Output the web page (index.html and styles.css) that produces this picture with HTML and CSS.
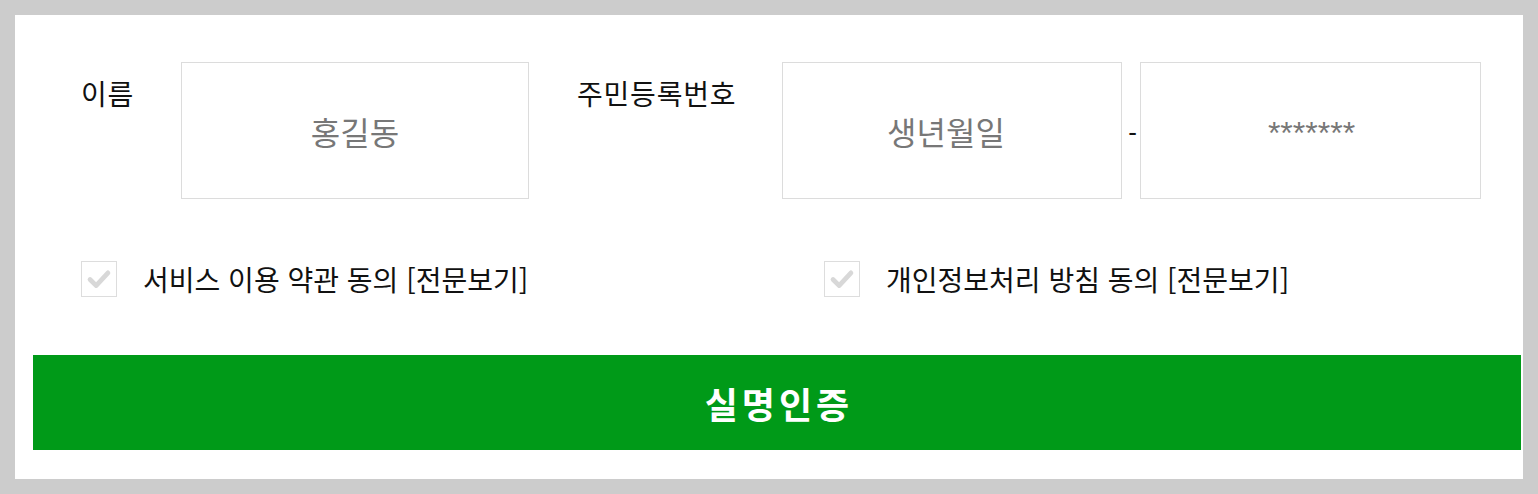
FILE: index.html
```html
<!DOCTYPE html>
<html lang="ko">
<head>
<meta charset="utf-8">
<title>실명인증</title>
<link rel="stylesheet" href="styles.css">
</head>
<body>
<div class="panel">
  <div class="fields">
    <div class="label label-name">이름</div>
    <div class="input input-name">홍길동</div>
    <div class="label label-rrn">주민등록번호</div>
    <div class="input input-birth">생년월일</div>
    <div class="dash">-</div>
    <div class="input input-back"><span class="stars">*******</span></div>
  </div>
  <div class="agrees">
    <label class="agree agree-first">
      <span class="check"><svg viewBox="0 0 36 36" width="34" height="34"><path d="M8.5 18.5 L15 25 L27.5 11.5" fill="none" stroke="#d8d8d8" stroke-width="5" stroke-linecap="round" stroke-linejoin="round"/></svg></span>
      <span class="agree-text">서비스 이용 약관 동의 [전문보기]</span>
    </label>
    <label class="agree">
      <span class="check"><svg viewBox="0 0 36 36" width="34" height="34"><path d="M8.5 18.5 L15 25 L27.5 11.5" fill="none" stroke="#d8d8d8" stroke-width="5" stroke-linecap="round" stroke-linejoin="round"/></svg></span>
      <span class="agree-text">개인정보처리 방침 동의 [전문보기]</span>
    </label>
  </div>
  <button class="submit" type="button">실명인증</button>
</div>
</body>
</html>
```

FILE: styles.css
```css
html, body {
  margin: 0;
  padding: 0;
}
body {
  background: #cccccc;
  padding: 15px;
  font-family: "Noto Sans CJK KR", "Noto Sans", sans-serif;
  color: #111;
}
.panel {
  background: #ffffff;
  width: 1508px;
  height: 464px;
  box-sizing: border-box;
  padding: 47px 2px 0 18px;
}
.fields {
  display: flex;
  align-items: flex-start;
  padding-left: 48px;
}
.label {
  font-size: 28px;
  line-height: 30px;
  padding-top: 16px;
  letter-spacing: 0.8px;
  color: #111;
  white-space: nowrap;
}
.label-name {
  width: 100px;
}
.label-rrn {
  width: 205px;
  margin-left: 48px;
}
.input {
  box-sizing: border-box;
  height: 137px;
  border: 1px solid #dcdcdc;
  display: flex;
  align-items: center;
  justify-content: center;
  font-size: 32px;
  color: #777777;
}
.input-name {
  width: 348px;
}
.input-birth {
  width: 340px;
  padding-right: 12px;
}
.input-back {
  width: 341px;
}
.stars {
  font-family: "Liberation Sans", Arial, sans-serif;
  font-size: 32px;
  padding-top: 6px;
  padding-left: 2px;
}
.dash {
  width: 18px;
  height: 137px;
  display: flex;
  align-items: center;
  justify-content: center;
  font-family: "Liberation Sans", Arial, sans-serif;
  font-size: 26px;
  color: #111;
  padding: 4px 0 0 3px;
  box-sizing: border-box;
}
.agrees {
  display: flex;
  padding-left: 48px;
  margin-top: 62px;
}
.agree {
  display: flex;
  align-items: center;
}
.agree-first {
  width: 743px;
}
.check {
  box-sizing: border-box;
  width: 36px;
  height: 36px;
  border: 1px solid #dddddd;
  display: flex;
  align-items: center;
  justify-content: center;
}
.agree-text {
  margin-left: 26px;
  font-size: 28px;
  line-height: 36px;
  color: #111;
}
.submit {
  display: block;
  margin-top: 58px;
  width: 1488px;
  height: 95px;
  border: none;
  background: #009a18;
  color: #ffffff;
  font-family: "Noto Sans CJK KR", "Noto Sans", sans-serif;
  font-size: 36px;
  font-weight: 700;
  letter-spacing: 4px;
  padding: 0 0 0 4px;
}
```
